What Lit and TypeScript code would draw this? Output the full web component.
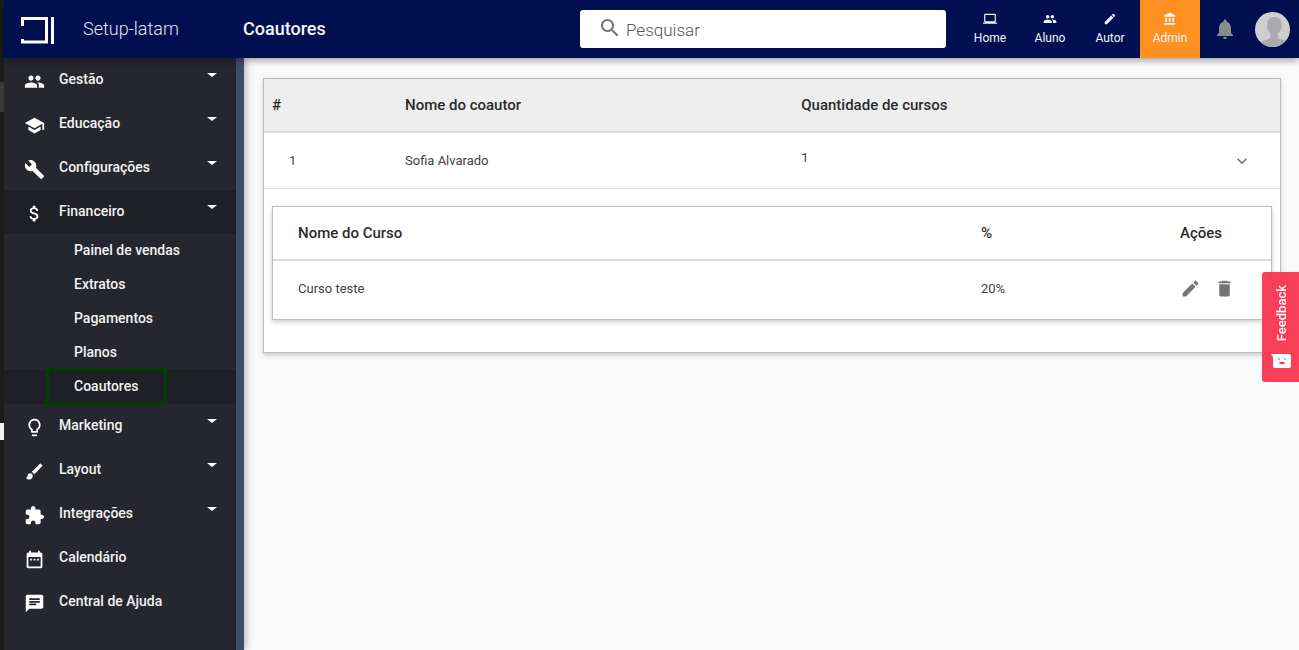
import { LitElement, html, css, svg, nothing } from "lit";
import { customElement, property, state } from "lit/decorators.js";
import { classMap } from "lit/directives/class-map.js";

const ICONS: Record<string, string> = {
  people:
    "M16 11c1.66 0 2.99-1.34 2.99-3S17.66 5 16 5s-3 1.34-3 3 1.34 3 3 3zm-8 0c1.66 0 2.99-1.34 2.99-3S9.66 5 8 5 5 6.34 5 8s1.34 3 3 3zm0 2c-2.33 0-7 1.17-7 3.5V19h14v-2.5c0-2.33-4.67-3.5-7-3.5zm8 0c-.29 0-.62.02-.97.05 1.16.84 1.97 1.97 1.97 3.45V19h6v-2.5c0-2.33-4.67-3.5-7-3.5z",
  school: "M5 13.18v4L12 21l7-3.82v-4L12 17l-7-3.82zM12 3 1 9l11 6 9-4.91V17h2V9L12 3z",
  build:
    "M22.7 19l-9.1-9.1c.9-2.3.4-5-1.5-6.9-2-2-5-2.4-7.4-1.3L9 6 6 9 1.6 4.7C.4 7.1.9 10.1 2.9 12.1c1.9 1.9 4.6 2.4 6.9 1.5l9.1 9.1c.4.4 1 .4 1.4 0l2.3-2.3c.5-.4.5-1.1.1-1.4z",
  money:
    "M11.8 10.9c-2.27-.59-3-1.2-3-2.15 0-1.09 1.01-1.85 2.7-1.85 1.78 0 2.44.85 2.5 2.1h2.21c-.07-1.72-1.12-3.3-3.21-3.81V3h-3v2.16c-1.94.42-3.5 1.68-3.5 3.61 0 2.31 1.91 3.46 4.7 4.13 2.5.6 3 1.48 3 2.41 0 .69-.49 1.79-2.7 1.79-2.06 0-2.87-.92-2.98-2.1h-2.2c.12 2.19 1.76 3.42 3.68 3.83V21h3v-2.15c1.95-.37 3.5-1.5 3.5-3.55 0-2.84-2.43-3.81-4.7-4.4z",
  bulb:
    "M9 21c0 .55.45 1 1 1h4c.55 0 1-.45 1-1v-1H9v1zm3-19C8.14 2 5 5.14 5 9c0 2.38 1.19 4.47 3 5.74V17c0 .55.45 1 1 1h6c.55 0 1-.45 1-1v-2.26c1.81-1.27 3-3.36 3-5.74 0-3.86-3.14-7-7-7zm2.85 11.1l-.85.6V16h-4v-2.3l-.85-.6C7.8 12.16 7 10.63 7 9c0-2.76 2.24-5 5-5s5 2.24 5 5c0 1.63-.8 3.16-2.15 4.1z",
  brush:
    "M7 14c-1.66 0-3 1.34-3 3 0 1.31-1.16 2-2 2 .92 1.22 2.49 2 4 2 2.21 0 4-1.79 4-4 0-1.66-1.34-3-3-3zm13.71-9.37l-1.34-1.34c-.39-.39-1.02-.39-1.41 0L9 12.25 11.75 15l8.96-8.96c.39-.39.39-1.02 0-1.41z",
  puzzle:
    "M20.5 11H19V7c0-1.1-.9-2-2-2h-4V3.5C13 2.12 11.88 1 10.5 1S8 2.12 8 3.5V5H4c-1.1 0-1.99.9-1.99 2v3.8H3.5c1.49 0 2.7 1.21 2.7 2.7s-1.21 2.7-2.7 2.7H2V20c0 1.1.9 2 2 2h3.8v-1.5c0-1.49 1.21-2.7 2.7-2.7 1.49 0 2.7 1.21 2.7 2.7V22H17c1.1 0 2-.9 2-2v-4h1.5c1.38 0 2.5-1.12 2.5-2.5S21.88 11 20.5 11z",
  calendar:
    "M9 11H7v2h2v-2zm4 0h-2v2h2v-2zm4 0h-2v2h2v-2zm2-7h-1V2h-2v2H8V2H6v2H5c-1.11 0-1.99.9-1.99 2L3 20c0 1.1.89 2 2 2h14c1.1 0 2-.9 2-2V6c0-1.1-.9-2-2-2zm0 16H5V9h14v11z",
  chat:
    "M20 2H4c-1.1 0-1.99.9-1.99 2L2 22l4-4h14c1.1 0 2-.9 2-2V4c0-1.1-.9-2-2-2zM6 9h12v2H6V9zm8 5H6v-2h8v2zm4-6H6V6h12v2z",
  laptop: "M20 18c1.100 0 2-.9 2-2V5c0-1.100-.9-2-2-2H4c-1.100 0-2 .9-2 2v11c0 1.100.9 2 2 2H0v2h24v-2h-4zM4 5h16v11H4V5z",
  edit:
    "M3 17.25V21h3.75L17.81 9.94l-3.75-3.75L3 17.25zM20.71 7.04c.39-.39.39-1.02 0-1.41l-2.34-2.34c-.39-.39-1.02-.39-1.41 0l-1.83 1.83 3.75 3.75 1.83-1.83z",
  bank: "M4 10v7h3v-7H4zm6 0v7h3v-7h-3zM2 22h19v-3H2v3zm14-12v7h3v-7h-3zm-4.500-9L2 6v2h19V6l-9.500-5z",
  bell:
    "M12 22c1.100 0 2-.9 2-2h-4c0 1.100.9 2 2 2zm6-6v-5c0-3.070-1.630-5.640-4.500-6.320V4c0-.83-.67-1.500-1.500-1.500s-1.500.67-1.500 1.500v.68C7.640 5.360 6 7.920 6 11v5l-2 2v1h16v-1l-2-2z",
  search:
    "M15.5 14h-.79l-.28-.27C15.41 12.59 16 11.11 16 9.5 16 5.91 13.09 3 9.5 3S3 5.91 3 9.5 5.91 16 9.5 16c1.61 0 3.09-.59 4.23-1.57l.27.28v.79l5 4.99L20.49 19l-4.99-5zm-6 0C7.01 14 5 11.99 5 9.5S7.01 5 9.5 5 14 7.01 14 9.5 11.99 14 9.5 14z",
  trash: "M6 19c0 1.100.9 2 2 2h8c1.100 0 2-.9 2-2V7H6v12zM19 4h-3.500l-1-1h-5l-1 1H5v2h14V4z",
  chevron: "M7.410 8.590 12 13.170l4.590-4.580L18 10l-6 6-6-6 1.410-1.410z",
};

@customElement("app-icon")
export class AppIcon extends LitElement {
  @property() name = "";

  static styles = css`
    :host {
      display: inline-block;
      width: 24px;
      height: 24px;
      flex: none;
    }
    .glyph {
      display: block;
      width: 100%;
      height: 100%;
      fill: currentColor;
    }
  `;

  render() {
    return html`<svg class="glyph" viewBox="0 0 24 24" aria-hidden="true">
      ${svg`<path d=${ICONS[this.name] ?? ""}></path>`}
    </svg>`;
  }
}

@customElement("top-bar")
export class TopBar extends LitElement {
  static styles = css`
    :host {
      display: flex;
      align-items: center;
      height: 58px;
      background: #000f50;
      color: #fff;
      box-shadow: 0 2px 8px rgba(0, 0, 0, 0.4);
    }
    .brand {
      display: flex;
      align-items: center;
      gap: 29px;
      width: 239px;
      padding-left: 17px;
      box-sizing: border-box;
      color: #e2e4ee;
      font-size: 18px;
      font-weight: 300;
      text-decoration: none;
      flex: none;
    }
    .logo {
      width: 33px;
      height: 27px;
      margin-top: 3px;
      flex: none;
    }
    .brand-name,
    .title {
      padding-bottom: 2px;
    }
    .title {
      margin: 0;
      font-size: 18px;
      font-weight: 500;
      color: #f4f5f9;
    }
    .search {
      display: flex;
      align-items: center;
      gap: 4px;
      flex: 0 1 366px;
      height: 38px;
      margin: 0 14px 0 auto;
      padding-left: 18px;
      box-sizing: border-box;
      border-radius: 3px;
      background: #fff;
      color: #757575;
    }
    .search app-icon {
      padding-bottom: 2px;
    }
    .search-input {
      flex: 1;
      min-width: 0;
      padding: 2px 0 0;
      border: 0;
      outline: 0;
      background: none;
      font: 300 17px Roboto, sans-serif;
      color: #444;
    }
    .search-input::placeholder {
      color: #555;
      opacity: 1;
    }
    .profiles {
      display: flex;
      align-self: stretch;
    }
    .profile {
      display: flex;
      flex-direction: column;
      align-items: center;
      gap: 4px;
      width: 60px;
      padding-top: 12px;
      box-sizing: border-box;
      font-size: 12px;
      line-height: 16px;
      color: #f4f5f9;
      text-decoration: none;
    }
    .profile app-icon {
      width: 14px;
      height: 14px;
    }
    .profile.current {
      background: #ff9122;
    }
    .icon-button {
      display: flex;
      justify-content: center;
      width: 50px;
      padding: 0;
      border: 0;
      background: none;
      color: #8b8b8b;
      cursor: pointer;
    }
    .avatar {
      width: 35px;
      height: 35px;
      margin: 0 9px 0 5px;
      padding: 0;
      border: 0;
      border-radius: 50%;
      overflow: hidden;
      background: #cfcfcf;
      cursor: pointer;
      flex: none;
    }
    .portrait {
      display: block;
    }
  `;

  private profiles = [
    { icon: "laptop", label: "Home" },
    { icon: "people", label: "Aluno" },
    { icon: "edit", label: "Autor" },
    { icon: "bank", label: "Admin", current: true },
  ];

  render() {
    return html`
      <a class="brand" href="#">
        <svg class="logo" viewBox="0 0 33 27" aria-hidden="true">
          <path d="M1.500 9V1.500H25.500V25H1.500V22M31.500 0V27" fill="none" stroke="#fff" stroke-width="3"></path>
        </svg>
        <span class="brand-name">Setup-latam</span>
      </a>
      <h1 class="title">Coautores</h1>
      <label class="search">
        <app-icon name="search"></app-icon>
        <input class="search-input" type="search" placeholder="Pesquisar" aria-label="Pesquisar" />
      </label>
      <nav class="profiles">
        ${this.profiles.map(
          (p) => html`<a class=${classMap({ profile: true, current: !!p.current })} href="#">
            <app-icon name=${p.icon}></app-icon><span>${p.label}</span>
          </a>`
        )}
      </nav>
      <button class="icon-button" aria-label="Notificações"><app-icon name="bell"></app-icon></button>
      <button class="avatar" aria-label="Perfil">
        <svg class="portrait" viewBox="0 0 35 35" width="35" height="35" aria-hidden="true">
          <path
            d="M19.500 5c-5 0-7.700 3.500-7.500 8 .1 4 1.600 6.500 3.500 8.500v4c-1 2-8 2.500-10.500 5.500L8 35h20l4-5c-3-2.500-8-2.500-9-4.500v-4c2-2 3.700-4.500 3.800-8.500.2-5-2.300-8-7.300-8z"
            fill="#aaa9b0"
          ></path>
        </svg>
      </button>
    `;
  }
}

interface MenuItem {
  icon: string;
  label: string;
  expandable?: boolean;
  children?: string[];
}

@customElement("side-menu")
export class SideMenu extends LitElement {
  @state() private open = "Financeiro";

  static styles = css`
    :host {
      display: block;
      box-sizing: border-box;
      width: 240px;
      border-right: 8px solid #404b66;
      background: #262630;
      color: #f2f2f3;
      box-shadow: 1px 0 8px rgba(0, 0, 0, 0.35);
      font-size: 14px;
      font-weight: 500;
      flex: none;
    }
    .list,
    .sublist {
      margin: 0;
      padding: 0;
      list-style: none;
    }
    .item {
      display: flex;
      align-items: center;
      gap: 14px;
      width: 100%;
      height: 44px;
      padding: 0 19px 0 20px;
      box-sizing: border-box;
      border: 0;
      background: none;
      color: inherit;
      font: inherit;
      text-align: left;
      text-decoration: none;
      cursor: pointer;
    }
    .item app-icon {
      width: 21px;
      height: 21px;
      padding-top: 3px;
      color: #fff;
    }
    .label {
      flex: 1;
      padding-bottom: 2px;
    }
    .caret {
      margin-bottom: 10px;
      border: 5px solid transparent;
      border-top: 4px solid #fff;
      border-bottom: 0;
    }
    .item.open,
    .subrow.current {
      background: #1f1f27;
    }
    .subrow {
      display: flex;
      height: 34px;
      padding-left: 44px;
    }
    .sublink {
      display: flex;
      align-items: center;
      min-width: 117px;
      padding: 0 0 2px 26px;
      box-sizing: border-box;
      color: inherit;
      text-decoration: none;
      white-space: nowrap;
    }
    .current .sublink {
      outline: 3px solid #003f00;
      outline-offset: -1px;
    }
  `;

  private items: MenuItem[] = [
    { icon: "people", label: "Gestão", expandable: true },
    { icon: "school", label: "Educação", expandable: true },
    { icon: "build", label: "Configurações", expandable: true },
    {
      icon: "money",
      label: "Financeiro",
      expandable: true,
      children: ["Painel de vendas", "Extratos", "Pagamentos", "Planos", "Coautores"],
    },
    { icon: "bulb", label: "Marketing", expandable: true },
    { icon: "brush", label: "Layout", expandable: true },
    { icon: "puzzle", label: "Integrações", expandable: true },
    { icon: "calendar", label: "Calendário" },
    { icon: "chat", label: "Central de Ajuda" },
  ];

  private renderItem(item: MenuItem) {
    const open = this.open === item.label;
    const body = html`<app-icon name=${item.icon}></app-icon><span class="label">${item.label}</span>`;
    if (!item.expandable) return html`<li><a class="item" href="#">${body}</a></li>`;
    return html`<li>
      <button
        class=${classMap({ item: true, open })}
        aria-expanded=${open}
        @click=${() => (this.open = open ? "" : item.label)}
      >
        ${body}<span class="caret"></span>
      </button>
      ${open && item.children
        ? html`<ul class="sublist">
            ${item.children.map(
              (c) => html`<li class=${classMap({ subrow: true, current: c === "Coautores" })}>
                <a class="sublink" href="#">${c}</a>
              </li>`
            )}
          </ul>`
        : nothing}
    </li>`;
  }

  render() {
    return html`<nav><ul class="list">${this.items.map((i) => this.renderItem(i))}</ul></nav>`;
  }
}

@customElement("coauthor-table")
export class CoauthorTable extends LitElement {
  static styles = css`
    :host {
      display: block;
    }
    .table {
      width: 100%;
      box-sizing: border-box;
      table-layout: fixed;
      border: 1px solid #bdbdbd;
      border-spacing: 0;
      background: #fff;
      box-shadow: 0 2px 5px rgba(0, 0, 0, 0.2);
      color: #424242;
      font-size: 13px;
      text-align: left;
    }
    th,
    td {
      padding: 0 8px;
      box-sizing: border-box;
    }
    th {
      height: 54px;
      border-bottom: 2px solid #ddd;
      color: #2b2b2b;
      font-size: 15px;
      font-weight: 500;
    }
    .outer > thead th {
      background: #eee;
    }
    .row > td {
      height: 56px;
      border-bottom: 1px solid #ddd;
    }
    .col-index {
      width: 133px;
    }
    .col-name {
      width: 39%;
    }
    .col-toggle {
      width: 76px;
    }
    .col-share {
      width: 199px;
    }
    .col-actions {
      width: 99px;
    }
    .row > .index {
      padding-left: 25px;
    }
    .row > .count {
      padding-bottom: 6px;
    }
    .toggle,
    .action {
      display: block;
      padding: 0;
      border: 0;
      background: none;
      color: #757575;
      cursor: pointer;
    }
    .toggle {
      margin: 0 auto;
    }
    .toggle app-icon {
      display: block;
      width: 20px;
      height: 20px;
    }
    .detail {
      padding: 17px 8px 32px;
    }
    .inner th:first-child,
    .inner td:first-child {
      padding-left: 25px;
    }
    .inner td {
      height: 58px;
      padding-bottom: 3px;
    }
    .actions {
      display: flex;
      gap: 13px;
    }
    .action app-icon {
      display: block;
      width: 21px;
      height: 21px;
    }
  `;

  render() {
    return html`<table class="table outer">
      <colgroup>
        <col class="col-index" />
        <col class="col-name" />
        <col />
        <col class="col-toggle" />
      </colgroup>
      <thead>
        <tr>
          <th>#</th>
          <th>Nome do coautor</th>
          <th>Quantidade de cursos</th>
          <th></th>
        </tr>
      </thead>
      <tbody>
        <tr class="row">
          <td class="index">1</td>
          <td>Sofia Alvarado</td>
          <td class="count">1</td>
          <td>
            <button class="toggle" aria-label="Ver cursos"><app-icon name="chevron"></app-icon></button>
          </td>
        </tr>
        <tr>
          <td class="detail" colspan="4">
            <table class="table inner">
              <colgroup>
                <col />
                <col class="col-share" />
                <col class="col-actions" />
              </colgroup>
              <thead>
                <tr>
                  <th>Nome do Curso</th>
                  <th>%</th>
                  <th>Ações</th>
                </tr>
              </thead>
              <tbody>
                <tr>
                  <td>Curso teste</td>
                  <td>20%</td>
                  <td>
                    <div class="actions">
                      <button class="action" aria-label="Editar"><app-icon name="edit"></app-icon></button>
                      <button class="action" aria-label="Excluir"><app-icon name="trash"></app-icon></button>
                    </div>
                  </td>
                </tr>
              </tbody>
            </table>
          </td>
        </tr>
      </tbody>
    </table>`;
  }
}

@customElement("app-root")
export class AppRoot extends LitElement {
  static styles = css`
    :host {
      display: flex;
      min-height: 100vh;
      background: #fafafa;
      font-family: Roboto, sans-serif;
    }
    .edge {
      position: relative;
      width: 4px;
      background: #1c1c1c;
      flex: none;
    }
    .mark {
      position: absolute;
      left: 0;
      width: 4px;
    }
    .mark.dim {
      top: 82px;
      height: 30px;
      background: #3b3b3b;
    }
    .mark.light {
      top: 423px;
      height: 17px;
      background: #f2f2f2;
    }
    .page {
      display: flex;
      flex-direction: column;
      flex: 1;
      min-width: 0;
    }
    .header {
      position: relative;
      z-index: 2;
    }
    .body {
      display: flex;
      flex: 1;
    }
    .content {
      flex: 1;
      min-width: 0;
      padding: 20px 18px 20px 19px;
    }
    .feedback {
      position: fixed;
      right: 0;
      top: 272px;
      z-index: 3;
      display: flex;
      flex-direction: column;
      align-items: center;
      gap: 12px;
      width: 37px;
      height: 110px;
      padding: 13px 0 0 1px;
      border: 0;
      border-radius: 3px 0 0 3px;
      background: rgba(247, 56, 80, 0.96);
      color: #fff;
      font: 500 13px Roboto, sans-serif;
      cursor: pointer;
    }
    .feedback-text {
      writing-mode: vertical-rl;
      transform: rotate(180deg);
    }
    .smile {
      width: 20px;
      height: 16px;
      flex: none;
    }
  `;

  render() {
    return html`
      <div class="edge"><span class="mark dim"></span><span class="mark light"></span></div>
      <div class="page">
        <top-bar class="header"></top-bar>
        <div class="body">
          <side-menu></side-menu>
          <main class="content"><coauthor-table></coauthor-table></main>
        </div>
      </div>
      <button class="feedback">
        <span class="feedback-text">Feedback</span>
        <svg class="smile" viewBox="0 0 20 16" aria-hidden="true">
          <path d="M0 1H18a2 2 0 0 1 2 2V13a2 2 0 0 1-2 2H4a2 2 0 0 1-2-2V4Z" fill="#fff"></path>
          <path d="M8 5v2M14 5v2" stroke="#f73850" stroke-width="1"></path>
          <path d="M8 9h6c-.5 3-5.500 3-6 0z" fill="#f73850"></path>
        </svg>
      </button>
    `;
  }
}
